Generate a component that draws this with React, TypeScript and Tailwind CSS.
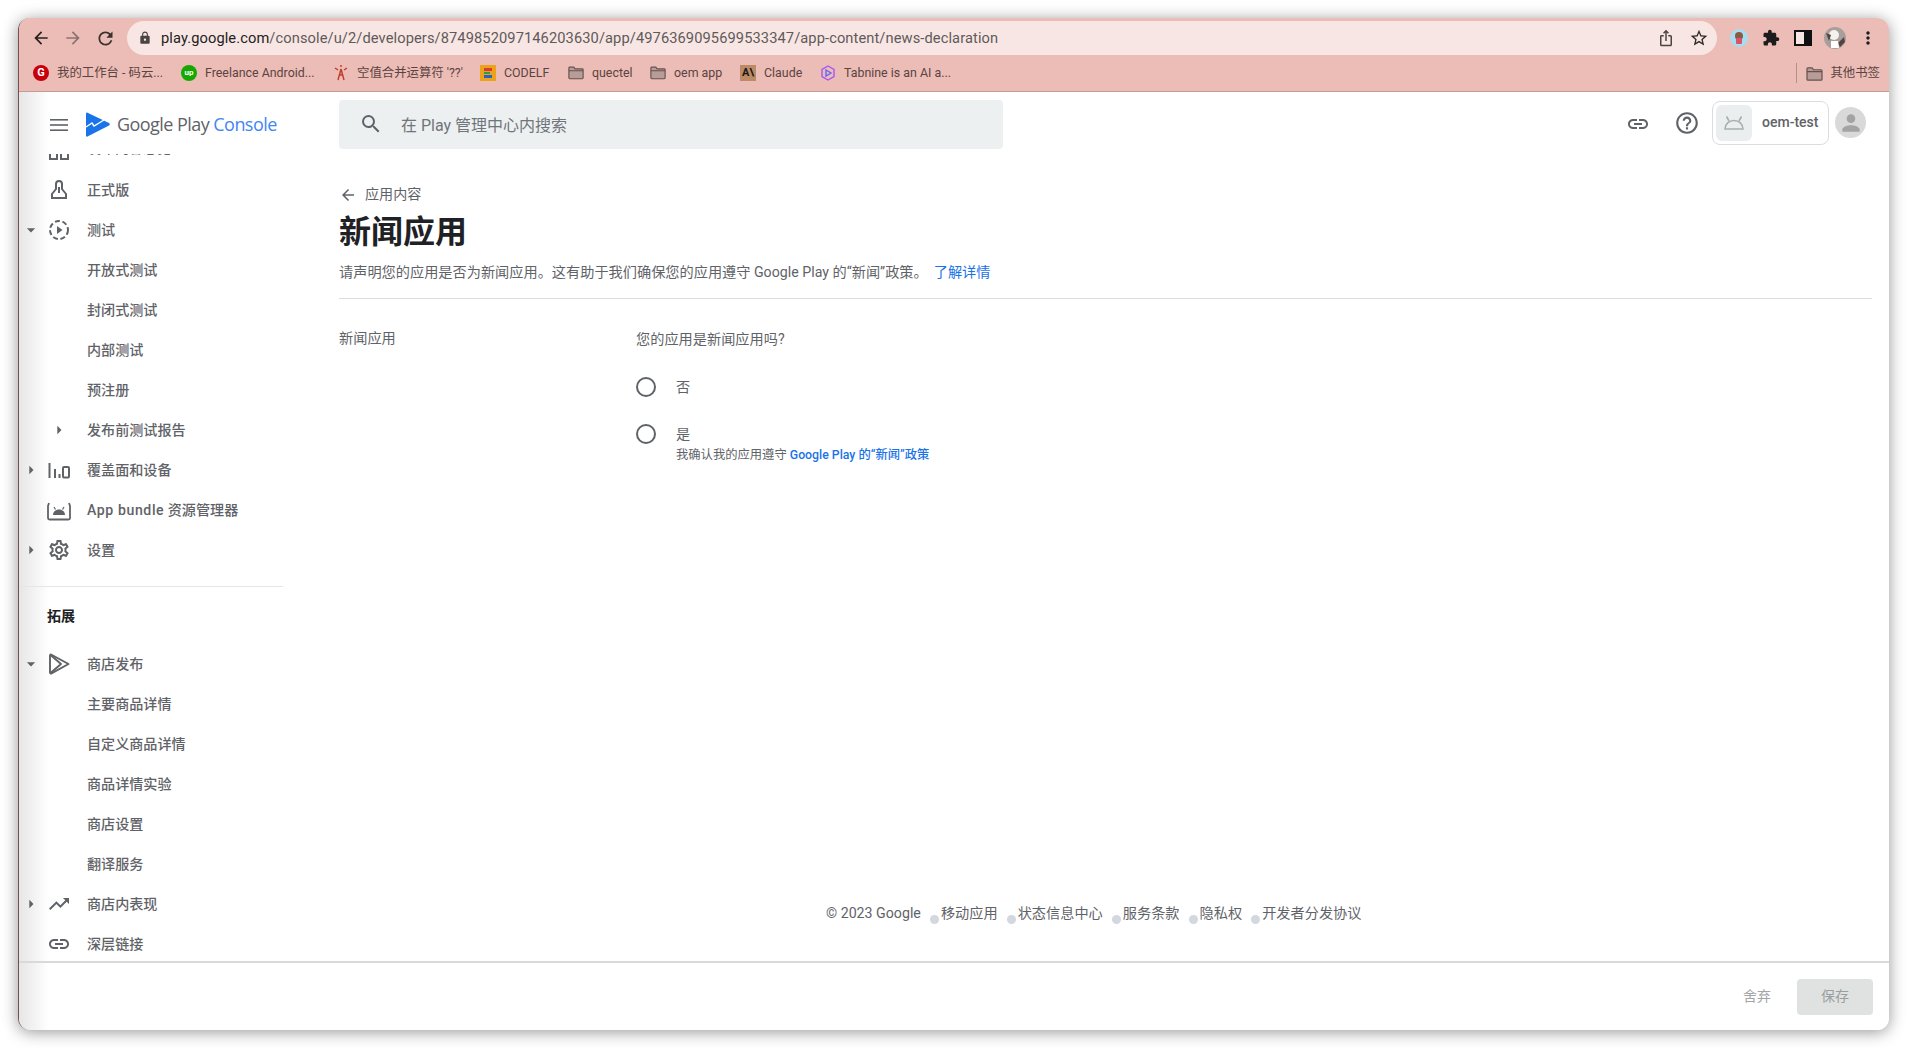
import React from 'react';
import {
  MdArrowBack,
  MdArrowForward,
  MdRefresh,
  MdLock,
  MdSearch,
  MdLink,
  MdHelpOutline,
  MdStarBorder,
  MdExtension,
  MdMoreVert,
  MdOutlineSettings,
  MdIosShare,
  MdTrendingUp,
  MdArrowDropDown,
  MdArrowRight,
  MdPerson,
} from 'react-icons/md';

const AndroidOutline = ({ className }: { className?: string }) => (
  <svg viewBox="0 0 24 24" className={className} fill="none" stroke="currentColor" strokeWidth="1.6">
    <path d="M3 18c0-5 4-8.5 9-8.5s9 3.5 9 8.5z" />
    <path d="M7 10 4.5 5.5M17 10l2.5-4.5" />
  </svg>
);

const FolderIcon = () => (
  <svg viewBox="0 0 18 16" className="w-[17px] h-[15px]" fill="#b89c97" stroke="#655250" strokeWidth="1.3">
    <path d="M1 3a1 1 0 0 1 1-1h4.5l1.5 2h8a1 1 0 0 1 1 1v9a1 1 0 0 1-1 1H2a1 1 0 0 1-1-1z" />
    <path d="M1 6h16" fill="none" />
  </svg>
);

const ReleaseIcon = () => (
  <svg viewBox="0 0 24 24" className="w-6 h-6" fill="none" stroke="currentColor" strokeWidth="2">
    <path d="M9 11V6a3 3 0 0 1 6 0v5l4 5v4H5v-4z" />
    <path d="M12 9v6" />
  </svg>
);

const TestIcon = () => (
  <svg viewBox="0 0 24 24" className="w-6 h-6" fill="none" stroke="currentColor" strokeWidth="2">
    <circle cx="12" cy="12" r="9" strokeDasharray="5 2.6" />
    <path d="M10 8l5.5 4-5.5 4z" fill="currentColor" stroke="none" />
  </svg>
);

const BarsIcon = () => (
  <svg viewBox="0 0 24 24" className="w-6 h-6" fill="none" stroke="currentColor" strokeWidth="2">
    <path d="M2.5 5v15M8 11v9M12.5 16v4" />
    <rect x="16" y="9" width="6" height="10.5" rx="1" />
  </svg>
);

const BundleIcon = () => (
  <svg viewBox="0 0 24 24" className="w-6 h-6" fill="none" stroke="currentColor" strokeWidth="1.8">
    <path d="M2 5 1 8v12a1.5 1.5 0 0 0 1.5 1.5h19A1.5 1.5 0 0 0 23 20V8l-1-3" />
    <path d="M6 17c0-3.2 2.6-5.5 6-5.5s6 2.3 6 5.5z" fill="currentColor" stroke="none" />
    <path d="M8.5 11.5 7 9M15.5 11.5 17 9" strokeWidth="1.2" />
  </svg>
);

const StoreIcon = () => (
  <svg viewBox="0 0 24 24" className="w-6 h-6" fill="none" stroke="currentColor" strokeWidth="1.9" strokeLinejoin="round">
    <path d="M3 3.5c0-.8.8-1.2 1.5-.8l17 9.3-17 9.3c-.7.4-1.5 0-1.5-.8z" />
    <path d="M3.5 3 14 12 3.5 21" />
  </svg>
);

const DashIcon = () => (
  <svg viewBox="0 0 24 24" className="w-6 h-6" fill="none" stroke="currentColor" strokeWidth="2">
    <rect x="3" y="14" width="7" height="7" />
    <rect x="14" y="14" width="7" height="7" />
  </svg>
);

const Caret = ({ open }: { open?: boolean }) =>
  open ? <MdArrowDropDown className="w-5 h-5" /> : <MdArrowRight className="w-5 h-5" />;

interface NavRowProps {
  label: React.ReactNode;
  icon?: React.ReactNode;
  caret?: 'open' | 'closed';
  subCaret?: boolean;
}

const NavRow: React.FC<NavRowProps> = ({ label, icon, caret, subCaret }) => (
  <div className="h-10 flex items-center text-[#5f6368] shrink-0">
    <div className="w-6 h-6 flex items-center justify-center">{caret && <Caret open={caret === 'open'} />}</div>
    <div className="w-6 h-6 ml-1 flex items-center justify-center">
      {icon}
      {subCaret && <Caret />}
    </div>
    <span className="ml-4 translate-y-[1px] text-[14.1px] font-medium whitespace-nowrap">{label}</span>
  </div>
);

const bookmarks = [
  {
    box: 'w-[148px]',
    label: '我的工作台 - 码云...',
    icon: (
      <div className="w-4 h-4 rounded-full bg-[#c7000b] flex items-center justify-center text-white text-[11px] font-bold leading-none">
        G
      </div>
    ),
  },
  {
    box: 'w-[152px]',
    label: 'Freelance Android...',
    icon: (
      <div className="w-4 h-4 rounded-full bg-[#14a800] flex items-center justify-center text-white text-[8px] font-bold leading-none">
        up
      </div>
    ),
  },
  {
    box: 'w-[147px]',
    label: "空值合并运算符 '??'",
    icon: (
      <svg viewBox="0 0 16 16" className="w-4 h-4" fill="none" stroke="#c0392b" strokeWidth="1.4">
        <path d="M8 4 5 15M8 4l3 11M6 10h4M2 3l3 2M14 3l-3 2M8 0v2" />
      </svg>
    ),
  },
  {
    box: 'w-[88px]',
    label: 'CODELF',
    icon: (
      <div className="w-4 h-4 bg-[#eda21b] flex flex-col items-start justify-center gap-[1px] pl-[4px]">
        <div className="w-2 h-[3px] bg-[#d93a32]" />
        <div className="w-1.5 h-[2px] bg-[#2f9e44]" />
        <div className="w-2 h-[3px] bg-[#2563c9]" />
      </div>
    ),
  },
  { box: 'w-[82px]', label: 'quectel', icon: <FolderIcon /> },
  { box: 'w-[90px]', label: 'oem app', icon: <FolderIcon /> },
  {
    box: 'w-[80px]',
    label: 'Claude',
    icon: (
      <div className="w-4 h-4 bg-[#bd8a66] flex items-center justify-center text-[#191919] text-[11px] font-bold leading-none">
        A\
      </div>
    ),
  },
  {
    box: 'w-[132px]',
    label: 'Tabnine is an AI a...',
    icon: (
      <svg viewBox="0 0 16 16" className="w-4 h-4" fill="none" stroke="#a855f7" strokeWidth="1.4">
        <path d="M8 1 14 4.5v7L8 15l-6-3.5v-7z" />
        <path d="M6 5l5 3-5 3z" stroke="#6366f1" />
      </svg>
    ),
  },
];

const footerLinks = ['移动应用', '状态信息中心', '服务条款', '隐私权', '开发者分发协议'];

export default function App() {
  return (
    <div className="w-[1907px] h-[1048px] bg-white pt-[18px] pl-[18px] pr-[18px] overflow-hidden font-['Roboto','Noto_Sans_CJK_SC',sans-serif]">
      <div className="h-[1012px] rounded-[12px] overflow-hidden flex flex-col bg-white border-l border-[#77504e] shadow-[0_2px_16px_rgba(0,0,0,0.42)]">
        {/* Browser toolbar */}
        <div className="h-[37px] shrink-0 bg-[#ebbdb6] flex items-end">
          <div className="w-[108px] h-[34px] flex items-center pl-[12px] gap-[9px] text-[#2a2220]">
            <MdArrowBack className="w-[20px] h-[20px]" />
            <MdArrowForward className="w-[20px] h-[20px] ml-[3px] text-[#8d7370]" />
            <MdRefresh className="w-[21px] h-[21px] ml-[3px] text-[#3a302e]" />
          </div>
          <div className="w-[1590px] h-[34px] rounded-full bg-[#f8e6e4] flex items-center pl-[11px] pr-[8px]">
            <MdLock className="w-[14px] h-[14px] text-[#4a4442]" />
            <span className="ml-[9px] translate-y-[1px] text-[14.65px] text-[#5f5a59] tracking-[0.1px] whitespace-nowrap">
              <span className="text-[#222]">play.google.com</span>
              /console/u/2/developers/8749852097146203630/app/4976369095699533347/app-content/news-declaration
            </span>
            <div className="ml-auto flex items-center gap-[14px] text-[#4a4442]">
              <MdIosShare className="w-[18px] h-[18px]" />
              <MdStarBorder className="w-[20px] h-[20px] text-[#2f2a29]" />
            </div>
          </div>
          <div className="flex-1 h-[34px] flex items-center pl-[13px] gap-[14px] text-[#1c1c1c]">
            <svg viewBox="0 0 18 18" className="w-[18px] h-[18px]">
              <circle cx="9" cy="9" r="9" fill="#a8dcef" />
              <circle cx="9" cy="7" r="4" fill="#8a5a44" />
              <rect x="6" y="9" width="6" height="6" rx="1" fill="#d9536b" />
            </svg>
            <MdExtension className="w-[18px] h-[18px]" />
            <div className="w-[18px] h-[16px] border-[2px] border-[#111] bg-[#f8e6e4] flex justify-end">
              <div className="w-[6px] h-full bg-[#111]" />
            </div>
            <svg viewBox="0 0 22 22" className="w-[22px] h-[22px] -mx-[2px]">
              <circle cx="11" cy="11" r="11" fill="#a89f9c" />
              <circle cx="10" cy="8" r="5" fill="#f4f1ee" />
              <path d="M2 6l5 2-2 6zM14 16l6-6 1 5-5 5z" fill="#4f4543" />
              <path d="M7 14h7l1 7H7z" fill="#ffffff" />
            </svg>
            <MdMoreVert className="w-[20px] h-[20px]" />
          </div>
        </div>

        {/* Bookmarks bar */}
        <div className="h-[37px] shrink-0 bg-[#ebbdb6] border-b border-[#c39a94] flex items-center pl-[14px] pr-[9px] text-[12.4px] text-[#5b4341]">
          {bookmarks.map((b) => (
            <div key={b.label} className={`${b.box} flex items-center gap-[8px] whitespace-nowrap`}>
              <div className="w-4 h-4 flex items-center justify-center shrink-0">{b.icon}</div>
              <span>{b.label}</span>
            </div>
          ))}
          <div className="ml-auto flex items-center">
            <div className="w-px h-[20px] bg-[#b98f89] mr-[9px]" />
            <FolderIcon />
            <span className="ml-[7px] whitespace-nowrap">其他书签</span>
          </div>
        </div>

        {/* Page */}
        <div className="flex-1 min-h-0 flex flex-col bg-[linear-gradient(90deg,#e6e6e6,#ffffff_30px)]">
          <header className="h-[62px] shrink-0 flex">
            <div className="w-[320px] shrink-0 flex items-start pt-[22px] pl-[31px]">
              <svg viewBox="0 0 18 12" className="w-[18px] h-[12px] mt-[5px] text-[#5f6368]" fill="currentColor">
                <rect width="18" height="1.6" />
                <rect y="5.2" width="18" height="1.6" />
                <rect y="10.4" width="18" height="1.6" />
              </svg>
              <svg viewBox="0 0 24 25" className="w-[24px] h-[25px] ml-[18px] -mt-[2px]">
                <path d="M1 0.5 23 11a1.5 1.5 0 0 1 0 2.6L1.5 24.5A1 1 0 0 1 0 23.6V1.4A1 1 0 0 1 1 .5z" fill="#1a73e8" />
                <path d="M0 15l6-4 2 3 10-6" fill="none" stroke="#ffffff" strokeWidth="1.4" />
              </svg>
              <span className="ml-[7px] -mt-[3px] text-[18px] leading-[26px] text-[#5f6368] tracking-[-0.55px] whitespace-nowrap font-['Open_Sans','Roboto',sans-serif]">
                Google Play <span className="text-[#4285f4]">Console</span>
              </span>
            </div>
            <div className="w-[664px] h-[49px] mt-[8px] rounded-[4px] bg-[#edf0f1] flex items-center pl-[20px] text-[16px] text-[#70757a]">
              <MdSearch className="w-[24px] h-[24px] text-[#5f6368] -mt-[2px]" />
              <span className="ml-[18px] mt-[3px]">在 Play 管理中心内搜索</span>
            </div>
            <div className="flex-1 flex items-start justify-end pr-[23px] text-[#5f6368]">
              <MdLink className="w-[24px] h-[24px] mt-[20px] mr-[24px]" />
              <MdHelpOutline className="w-[26px] h-[26px] mt-[18px] mr-[12px]" />
              <div className="w-[117px] h-[44px] mt-[9px] rounded-[8px] border border-[#dadce0] flex items-center pl-[3px]">
                <div className="w-[36px] h-[36px] rounded-[6px] bg-[#ebeeef] flex items-center justify-center text-[#a9aeb0]">
                  <AndroidOutline className="w-[24px] h-[24px]" />
                </div>
                <span className="ml-[10px] -mt-[2px] text-[14px] font-medium text-[#5f6368]">oem-test</span>
              </div>
              <div className="w-[31px] h-[31px] mt-[15px] ml-[6px] rounded-full bg-[#d9d9d9] flex items-center justify-center">
                <MdPerson className="w-[26px] h-[26px] text-[#a3a3a3]" />
              </div>
            </div>
          </header>

          <div className="flex-1 min-h-0 flex">
            {/* Side nav */}
            <aside className="w-[264px] shrink-0 overflow-hidden">
              <div className="-mt-[24px] flex flex-col">
                <div className="h-10 flex items-center text-[#5f6368] shrink-0">
                  <div className="w-6 h-6 ml-7">
                    <DashIcon />
                  </div>
                  <span className="ml-4 -translate-y-[2px] text-[14px] font-medium whitespace-nowrap">发布内容总览</span>
                </div>
                <NavRow label="正式版" icon={<ReleaseIcon />} />
                <NavRow label="测试" icon={<TestIcon />} caret="open" />
                <NavRow label="开放式测试" />
                <NavRow label="封闭式测试" />
                <NavRow label="内部测试" />
                <NavRow label="预注册" />
                <NavRow label="发布前测试报告" subCaret />
                <NavRow label="覆盖面和设备" icon={<BarsIcon />} caret="closed" />
                <NavRow
                  label={
                    <>
                      <span className="tracking-[0.6px]">App bundle</span> 资源管理器
                    </>
                  }
                  icon={<BundleIcon />}
                />
                <NavRow label="设置" icon={<MdOutlineSettings className="w-6 h-6" />} caret="closed" />
                <div className="mt-[16px] border-t border-[#e4e6e8]" />
                <div className="h-[18px] mt-[20px] pl-[28px] text-[14px] leading-[18px] font-bold text-[#202124]">拓展</div>
                <div className="h-[19px]" />
                <NavRow label="商店发布" icon={<StoreIcon />} caret="open" />
                <NavRow label="主要商品详情" />
                <NavRow label="自定义商品详情" />
                <NavRow label="商品详情实验" />
                <NavRow label="商店设置" />
                <NavRow label="翻译服务" />
                <NavRow label="商店内表现" icon={<MdTrendingUp className="w-6 h-6" />} caret="closed" />
                <NavRow label="深层链接" icon={<MdLink className="w-6 h-6" />} />
              </div>
            </aside>

            {/* Main content */}
            <main className="flex-1 min-w-0 flex flex-col pl-[56px] pr-[17px]">
              <div className="mt-[31px] h-5 flex items-center text-[14.1px] text-[#5f6368]">
                <MdArrowBack className="w-[18px] h-[18px]" />
                <span className="ml-[8px]">应用内容</span>
              </div>
              <h1 className="mt-[7px] h-10 text-[32px] leading-10 font-semibold text-[#202124]">新闻应用</h1>
              <p className="mt-[10px] h-5 text-[14.2px] leading-5 text-[#5f6368]">
                请声明您的应用是否为新闻应用。这有助于我们确保您的应用遵守 Google Play 的“新闻”政策。
                <span className="ml-[6px] text-[#1a73e8]">了解详情</span>
              </p>
              <div className="mt-[16px] border-t border-[#dadce0]" />
              <div className="mt-[30px] flex text-[14.2px] leading-5 text-[#5f6368]">
                <div className="w-[297px] -mt-[1px]">新闻应用</div>
                <div className="flex flex-col">
                  <div>您的应用是新闻应用吗?</div>
                  <div className="mt-[28px] flex items-center h-5">
                    <div className="w-5 h-5 rounded-full border-2 border-[#5f6368]" />
                    <span className="ml-[20px]">否</span>
                  </div>
                  <div className="mt-[27px] flex items-start">
                    <div className="w-5 h-5 rounded-full border-2 border-[#5f6368]" />
                    <div className="ml-[20px] flex flex-col">
                      <span>是</span>
                      <span className="mt-[2px] text-[12.3px] leading-[18px]">
                        我确认我的应用遵守{' '}
                        <span className="font-medium text-[#1a73e8]">Google Play 的“新闻”政策</span>
                      </span>
                    </div>
                  </div>
                </div>
              </div>
              <footer className="mt-auto mb-[37px] ml-[487px] h-5 flex items-center text-[14.2px] text-[#5f6368] whitespace-nowrap">
                <span>© 2023 Google</span>
                {footerLinks.map((l) => (
                  <React.Fragment key={l}>
                    <span className="ml-[9px] w-[9px] h-[9px] rounded-full bg-[#d3d7de] translate-y-[5px]" />
                    <span className="ml-[2px]">{l}</span>
                  </React.Fragment>
                ))}
              </footer>
            </main>
          </div>

          {/* Action bar */}
          <div className="h-[69px] shrink-0 border-t-2 border-[#d8d9da] flex items-center justify-end pr-[16px] text-[14px]">
            <span className="text-[#a3a6a8] mr-[26px]">舍弃</span>
            <div className="w-[76px] h-[36px] rounded-[4px] bg-[#e0e2e2] flex items-center justify-center text-[#9a9e9f]">
              保存
            </div>
          </div>
        </div>
      </div>
    </div>
  );
}
